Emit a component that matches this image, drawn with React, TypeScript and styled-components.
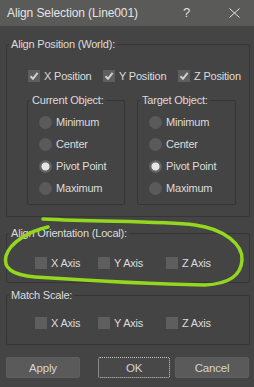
import React from "react";
import styled, { createGlobalStyle } from "styled-components";

const Global = createGlobalStyle`
  html, body { margin: 0; padding: 0; background: #444444; }
  body { font-family: "Liberation Sans", Arial, sans-serif; }
`;

const Window = styled.div`
  position: relative;
  width: 254px;
  height: 387px;
  background: #444444;
  overflow: hidden;
  color: #dcdcdc;
  font-size: 11px;
  letter-spacing: -0.2px;
`;

const TitleBar = styled.div`
  height: 26px;
  background: #5a5a58;
  display: flex;
  align-items: center;
  padding-left: 7px;
  box-sizing: border-box;
`;

const Title = styled.div`
  flex: 1;
  font-size: 12px;
  letter-spacing: -0.1px;
  color: #e4e4e4;
  line-height: 14px;
`;

const Help = styled.div`
  width: 10px;
  font-size: 13px;
  color: #e0e0e0;
  margin-right: 36px;
  line-height: 14px;
`;

const CloseIcon = styled.svg`
  width: 11px;
  height: 10px;
  margin-right: 14px;
`;

const Content = styled.div`
  padding: 0 4px 0 6px;
  display: flex;
  flex-direction: column;
`;

const Group = styled.fieldset<{ $mt: number; $pb: number }>`
  margin: ${(p) => p.$mt}px 0 0 0;
  padding: 0 0 ${(p) => p.$pb}px 0;
  border: 1px solid #353535;
  border-radius: 2px;
  min-inline-size: 0;
  box-sizing: border-box;
`;

const Legend = styled.legend`
  margin-left: 2px;
  padding: 0 2px;
  font-size: 11px;
  line-height: 13px;
  color: #dcdcdc;
`;

const CheckRow = styled.div<{ $pt: number; $pl: number; $cols: string }>`
  display: grid;
  grid-template-columns: ${(p) => p.$cols};
  padding: ${(p) => p.$pt}px 0 0 ${(p) => p.$pl}px;
  height: 14px;
`;

const CheckItem = styled.label`
  display: flex;
  align-items: center;
  gap: 4px;
  height: 14px;
  line-height: 14px;
  white-space: nowrap;
`;

const Box = styled.span`
  width: 12px;
  height: 12px;
  background: #5e5e5e;
  display: flex;
  align-items: center;
  justify-content: center;
  flex: none;
`;

const InnerRow = styled.div`
  display: grid;
  grid-template-columns: 98px 99px;
  column-gap: 12px;
  padding-left: 20px;
  margin-top: 11px;
`;

const RadioList = styled.div`
  padding: 4px 0 0 11px;
  display: flex;
  flex-direction: column;
`;

const RadioItem = styled.div`
  height: 22px;
  display: flex;
  align-items: center;
  gap: 4px;
  white-space: nowrap;
`;

const Circle = styled.span<{ $on?: boolean }>`
  width: 13px;
  height: 13px;
  border-radius: 50%;
  flex: none;
  background: ${(p) =>
    p.$on
      ? "radial-gradient(circle, #e6e6e6 0 3.6px, #6a6a6a 4.4px, #5c5c5c 6.5px)"
      : "#5a5a5a"};
`;

const Buttons = styled.div`
  display: flex;
  margin-top: 12px;
  height: 21px;
`;

const Btn = styled.div<{ $focus?: boolean; $ml?: number; $w: number }>`
  margin-left: ${(p) => p.$ml ?? 0}px;
  width: ${(p) => p.$w}px;
  height: 21px;
  box-sizing: border-box;
  border-radius: 2px;
  display: flex;
  align-items: center;
  justify-content: center;
  font-size: 11.5px;
  color: #d4d4d4;
  background: ${(p) => (p.$focus ? "#484848" : "#5a5a5a")};
  border: 1px ${(p) => (p.$focus ? "dotted #c8c8c8" : "solid #5e5e5e")};
`;

const Overlay = styled.svg`
  position: absolute;
  left: 0;
  top: 0;
  pointer-events: none;
`;

const Check = () => (
  <svg width="12" height="12" viewBox="0 0 12 12">
    <path d="M2.5 6.3 L5 8.8 L9.6 2.8" fill="none" stroke="#d0d0d0" strokeWidth="2" />
  </svg>
);

const CB = ({ label, on }: { label: string; on?: boolean }) => (
  <CheckItem>
    <Box>{on && <Check />}</Box>
    {label}
  </CheckItem>
);

const Radios = ({ title }: { title: string }) => (
  <Group $mt={0} $pb={5}>
    <Legend>{title}</Legend>
    <RadioList>
      <RadioItem><Circle />Minimum</RadioItem>
      <RadioItem><Circle />Center</RadioItem>
      <RadioItem><Circle $on />Pivot Point</RadioItem>
      <RadioItem><Circle />Maximum</RadioItem>
    </RadioList>
  </Group>
);

export default function App() {
  return (
    <Window>
      <Global />
      <TitleBar>
        <Title>Align Selection (Line001)</Title>
        <Help>?</Help>
        <CloseIcon viewBox="0 0 11 10">
          <path d="M0.5 0.5 L10.5 9.5 M10.5 0.5 L0.5 9.5" stroke="#e0e0e0" strokeWidth="1" />
        </CloseIcon>
      </TitleBar>
      <Content>
        <Group $mt={12} $pb={11}>
          <Legend>Align Position (World):</Legend>
          <CheckRow $pt={18} $pl={21} $cols="75px 75px 75px">
            <CB label="X Position" on />
            <CB label="Y Position" on />
            <CB label="Z Position" on />
          </CheckRow>
          <InnerRow>
            <Radios title="Current Object:" />
            <Radios title="Target Object:" />
          </InnerRow>
        </Group>
        <Group $mt={10} $pb={12}>
          <Legend>Align Orientation (Local):</Legend>
          <CheckRow $pt={16} $pl={28} $cols="63px 68px 60px">
            <CB label="X Axis" />
            <CB label="Y Axis" />
            <CB label="Z Axis" />
          </CheckRow>
        </Group>
        <Group $mt={6} $pb={14}>
          <Legend>Match Scale:</Legend>
          <CheckRow $pt={14} $pl={28} $cols="63px 68px 60px">
            <CB label="X Axis" />
            <CB label="Y Axis" />
            <CB label="Z Axis" />
          </CheckRow>
        </Group>
        <Buttons>
          <Btn $w={74}>Apply</Btn>
          <Btn $w={72} $focus $ml={18}>OK</Btn>
          <Btn $w={74} $ml={5}>Cancel</Btn>
        </Buttons>
      </Content>
      <Overlay width="254" height="387" viewBox="0 0 254 387">
        <path
          d="M48 227 C30 231, 10 242, 6 256 C3 268, 12 275, 35 277 C80 280, 150 284, 205 285 C228 284, 241 276, 242 260 C243 245, 225 229, 195 225 C160 221, 100 222, 43 219"
          fill="none"
          stroke="#93d71f"
          strokeWidth="3.5"
          strokeLinecap="round"
        />
      </Overlay>
    </Window>
  );
}
